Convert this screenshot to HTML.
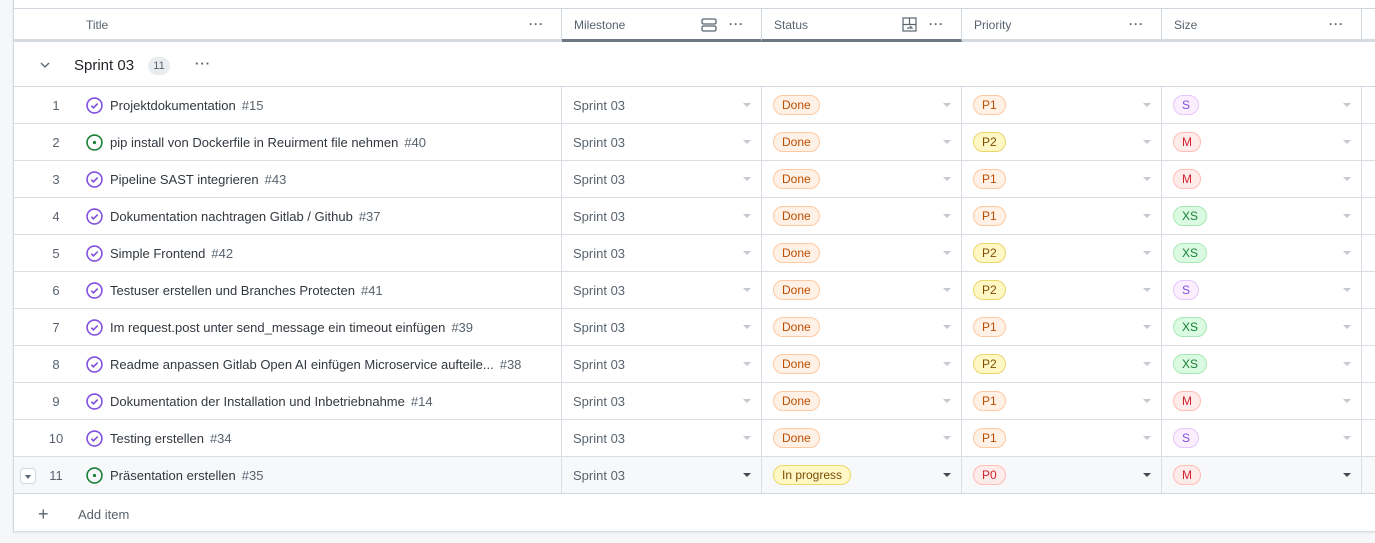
<!DOCTYPE html><html><head><meta charset="utf-8"><style>
*{box-sizing:border-box;margin:0;padding:0}
body{width:1375px;height:543px;background:#f6f7f9;font-family:"Liberation Sans",sans-serif;font-size:13px;color:#1f2328;overflow:hidden;position:relative}
.wrap{position:absolute;left:13px;top:0;width:1362px;height:532px;background:#fff;border-left:1px solid #d0d7de;box-shadow:0 1px 2px rgba(0,0,0,.08)}
.top{position:absolute;left:0;top:8px;width:1362px;border-top:1px solid #d0d7de}
.hdr{position:absolute;top:9px;height:33px;border-right:1px solid #d0d7de;border-bottom:3px solid #d6dbe1;font-size:12px;color:#59636e;padding:9px 0 0 12px}
.hdr.dk{border-bottom-color:#6e7781}
.dots{position:absolute;right:17px;top:8px;letter-spacing:1px;font-size:12px;color:#59636e;font-weight:bold}
.grp{position:absolute;left:0;top:42px;width:1362px;height:45px;border-bottom:1px solid #d0d7de}
.row{position:absolute;left:0;width:1362px;height:37px;border-bottom:1px solid #d8dee4}
.c{position:absolute;top:0;height:36px;border-right:1px solid #d8dee4}
.num{position:absolute;left:29px;width:26px;text-align:center;top:11px;color:#59636e}
.ic{position:absolute;left:72px;top:10px}
.t{position:absolute;left:96px;top:11px;color:#32383f;white-space:nowrap}
.t span{color:#59636e;margin-left:6px}
.ms{position:absolute;left:11px;top:11px;color:#59636e}
.car{position:absolute;right:10px;top:16px;width:0;height:0;border-left:4px solid transparent;border-right:4px solid transparent;border-top:4px solid #c4c9cf}
.pill{position:absolute;left:11px;top:8px;height:20px;border-radius:10px;border:1px solid;font-size:12px;line-height:18px;padding:0 8px}
.o{background:#fff1e5;border-color:#ffc9a0;color:#bc4c00}
.y{background:#fff8c5;border-color:#ebd66a;color:#7d4e00}
.r{background:#ffebe9;border-color:#ffbdb5;color:#cf222e}
.p{background:#fbefff;border-color:#e5c6fb;color:#8250df}
.g{background:#dafbe1;border-color:#a6e8b5;color:#1a7f37}
</style></head><body>
<div class="wrap">
<div class="top"></div>
<div class="hdr" style="left:0;width:548px;padding-left:72px">Title<span class="dots">···</span></div>
<div class="hdr dk" style="left:548px;width:200px">Milestone<svg style="position:absolute;right:44px;top:9px" width="16" height="14" viewBox="0 0 16 14"><rect x="1" y="1" width="14" height="5" rx="1.5" fill="none" stroke="#59636e" stroke-width="1.3"/><rect x="1" y="8" width="14" height="5" rx="1.5" fill="none" stroke="#59636e" stroke-width="1.3"/></svg><span class="dots">···</span></div>
<div class="hdr dk" style="left:748px;width:200px">Status<svg style="position:absolute;right:44px;top:8px" width="15" height="15" viewBox="0 0 15 15"><rect x="1" y="1" width="13" height="13" fill="none" stroke="#59636e" stroke-width="1.2"/><path d="M1 7.5H14M7.5 1V7.5M5 11h5l-2-2" fill="none" stroke="#59636e" stroke-width="1.2"/></svg><span class="dots">···</span></div>
<div class="hdr" style="left:948px;width:200px">Priority<span class="dots">···</span></div>
<div class="hdr" style="left:1148px;width:200px">Size<span class="dots">···</span></div>
<div class="hdr" style="left:1348px;width:14px;border-right:none"></div>
<div class="grp">
<svg style="position:absolute;left:26px;top:20px" width="10" height="7" viewBox="0 0 10 7"><path d="M1 1l4 4 4-4" fill="none" stroke="#59636e" stroke-width="1.3"/></svg>
<span style="position:absolute;left:60px;top:15px;font-size:15px;color:#1f2328">Sprint 03</span>
<span style="position:absolute;left:134px;top:15px;width:22px;height:18px;border-radius:9px;background:#eaedf0;font-size:11px;text-align:center;line-height:18px;color:#59636e">11</span>
<span style="position:absolute;left:181px;top:14px;font-weight:bold;letter-spacing:1px;color:#59636e">···</span>
</div>

<div class="row" style="top:87px"><div class="num">1</div><svg class="ic" width="17" height="17" viewBox="0 0 16 16"><circle cx="8" cy="8" r="7" fill="none" stroke="#8250df" stroke-width="1.5"/><path d="M5 8.2l2 2 4-4" fill="none" stroke="#8250df" stroke-width="1.5"/></svg><div class="t">Projektdokumentation<span>#15</span></div><div class="c" style="left:0;width:548px"></div><div class="c" style="left:548px;width:200px"><div class="ms">Sprint 03</div><div class="car"></div></div><div class="c" style="left:748px;width:200px"><div class="pill o">Done</div><div class="car"></div></div><div class="c" style="left:948px;width:200px"><div class="pill o">P1</div><div class="car"></div></div><div class="c" style="left:1148px;width:200px"><div class="pill p">S</div><div class="car"></div></div></div>

<div class="row" style="top:124px"><div class="num">2</div><svg class="ic" width="17" height="17" viewBox="0 0 16 16"><circle cx="8" cy="8" r="7" fill="none" stroke="#1a7f37" stroke-width="1.5"/><circle cx="8" cy="8" r="1.5" fill="#1a7f37"/></svg><div class="t">pip install von Dockerfile in Reuirment file nehmen<span>#40</span></div><div class="c" style="left:0;width:548px"></div><div class="c" style="left:548px;width:200px"><div class="ms">Sprint 03</div><div class="car"></div></div><div class="c" style="left:748px;width:200px"><div class="pill o">Done</div><div class="car"></div></div><div class="c" style="left:948px;width:200px"><div class="pill y">P2</div><div class="car"></div></div><div class="c" style="left:1148px;width:200px"><div class="pill r">M</div><div class="car"></div></div></div>

<div class="row" style="top:161px"><div class="num">3</div><svg class="ic" width="17" height="17" viewBox="0 0 16 16"><circle cx="8" cy="8" r="7" fill="none" stroke="#8250df" stroke-width="1.5"/><path d="M5 8.2l2 2 4-4" fill="none" stroke="#8250df" stroke-width="1.5"/></svg><div class="t">Pipeline SAST integrieren<span>#43</span></div><div class="c" style="left:0;width:548px"></div><div class="c" style="left:548px;width:200px"><div class="ms">Sprint 03</div><div class="car"></div></div><div class="c" style="left:748px;width:200px"><div class="pill o">Done</div><div class="car"></div></div><div class="c" style="left:948px;width:200px"><div class="pill o">P1</div><div class="car"></div></div><div class="c" style="left:1148px;width:200px"><div class="pill r">M</div><div class="car"></div></div></div>

<div class="row" style="top:198px"><div class="num">4</div><svg class="ic" width="17" height="17" viewBox="0 0 16 16"><circle cx="8" cy="8" r="7" fill="none" stroke="#8250df" stroke-width="1.5"/><path d="M5 8.2l2 2 4-4" fill="none" stroke="#8250df" stroke-width="1.5"/></svg><div class="t">Dokumentation nachtragen Gitlab / Github<span>#37</span></div><div class="c" style="left:0;width:548px"></div><div class="c" style="left:548px;width:200px"><div class="ms">Sprint 03</div><div class="car"></div></div><div class="c" style="left:748px;width:200px"><div class="pill o">Done</div><div class="car"></div></div><div class="c" style="left:948px;width:200px"><div class="pill o">P1</div><div class="car"></div></div><div class="c" style="left:1148px;width:200px"><div class="pill g">XS</div><div class="car"></div></div></div>

<div class="row" style="top:235px"><div class="num">5</div><svg class="ic" width="17" height="17" viewBox="0 0 16 16"><circle cx="8" cy="8" r="7" fill="none" stroke="#8250df" stroke-width="1.5"/><path d="M5 8.2l2 2 4-4" fill="none" stroke="#8250df" stroke-width="1.5"/></svg><div class="t">Simple Frontend<span>#42</span></div><div class="c" style="left:0;width:548px"></div><div class="c" style="left:548px;width:200px"><div class="ms">Sprint 03</div><div class="car"></div></div><div class="c" style="left:748px;width:200px"><div class="pill o">Done</div><div class="car"></div></div><div class="c" style="left:948px;width:200px"><div class="pill y">P2</div><div class="car"></div></div><div class="c" style="left:1148px;width:200px"><div class="pill g">XS</div><div class="car"></div></div></div>

<div class="row" style="top:272px"><div class="num">6</div><svg class="ic" width="17" height="17" viewBox="0 0 16 16"><circle cx="8" cy="8" r="7" fill="none" stroke="#8250df" stroke-width="1.5"/><path d="M5 8.2l2 2 4-4" fill="none" stroke="#8250df" stroke-width="1.5"/></svg><div class="t">Testuser erstellen und Branches Protecten<span>#41</span></div><div class="c" style="left:0;width:548px"></div><div class="c" style="left:548px;width:200px"><div class="ms">Sprint 03</div><div class="car"></div></div><div class="c" style="left:748px;width:200px"><div class="pill o">Done</div><div class="car"></div></div><div class="c" style="left:948px;width:200px"><div class="pill y">P2</div><div class="car"></div></div><div class="c" style="left:1148px;width:200px"><div class="pill p">S</div><div class="car"></div></div></div>

<div class="row" style="top:309px"><div class="num">7</div><svg class="ic" width="17" height="17" viewBox="0 0 16 16"><circle cx="8" cy="8" r="7" fill="none" stroke="#8250df" stroke-width="1.5"/><path d="M5 8.2l2 2 4-4" fill="none" stroke="#8250df" stroke-width="1.5"/></svg><div class="t">Im request.post unter send_message ein timeout einfügen<span>#39</span></div><div class="c" style="left:0;width:548px"></div><div class="c" style="left:548px;width:200px"><div class="ms">Sprint 03</div><div class="car"></div></div><div class="c" style="left:748px;width:200px"><div class="pill o">Done</div><div class="car"></div></div><div class="c" style="left:948px;width:200px"><div class="pill o">P1</div><div class="car"></div></div><div class="c" style="left:1148px;width:200px"><div class="pill g">XS</div><div class="car"></div></div></div>

<div class="row" style="top:346px"><div class="num">8</div><svg class="ic" width="17" height="17" viewBox="0 0 16 16"><circle cx="8" cy="8" r="7" fill="none" stroke="#8250df" stroke-width="1.5"/><path d="M5 8.2l2 2 4-4" fill="none" stroke="#8250df" stroke-width="1.5"/></svg><div class="t">Readme anpassen Gitlab Open AI einfügen Microservice aufteile...<span>#38</span></div><div class="c" style="left:0;width:548px"></div><div class="c" style="left:548px;width:200px"><div class="ms">Sprint 03</div><div class="car"></div></div><div class="c" style="left:748px;width:200px"><div class="pill o">Done</div><div class="car"></div></div><div class="c" style="left:948px;width:200px"><div class="pill y">P2</div><div class="car"></div></div><div class="c" style="left:1148px;width:200px"><div class="pill g">XS</div><div class="car"></div></div></div>

<div class="row" style="top:383px"><div class="num">9</div><svg class="ic" width="17" height="17" viewBox="0 0 16 16"><circle cx="8" cy="8" r="7" fill="none" stroke="#8250df" stroke-width="1.5"/><path d="M5 8.2l2 2 4-4" fill="none" stroke="#8250df" stroke-width="1.5"/></svg><div class="t">Dokumentation der Installation und Inbetriebnahme<span>#14</span></div><div class="c" style="left:0;width:548px"></div><div class="c" style="left:548px;width:200px"><div class="ms">Sprint 03</div><div class="car"></div></div><div class="c" style="left:748px;width:200px"><div class="pill o">Done</div><div class="car"></div></div><div class="c" style="left:948px;width:200px"><div class="pill o">P1</div><div class="car"></div></div><div class="c" style="left:1148px;width:200px"><div class="pill r">M</div><div class="car"></div></div></div>

<div class="row" style="top:420px"><div class="num">10</div><svg class="ic" width="17" height="17" viewBox="0 0 16 16"><circle cx="8" cy="8" r="7" fill="none" stroke="#8250df" stroke-width="1.5"/><path d="M5 8.2l2 2 4-4" fill="none" stroke="#8250df" stroke-width="1.5"/></svg><div class="t">Testing erstellen<span>#34</span></div><div class="c" style="left:0;width:548px"></div><div class="c" style="left:548px;width:200px"><div class="ms">Sprint 03</div><div class="car"></div></div><div class="c" style="left:748px;width:200px"><div class="pill o">Done</div><div class="car"></div></div><div class="c" style="left:948px;width:200px"><div class="pill o">P1</div><div class="car"></div></div><div class="c" style="left:1148px;width:200px"><div class="pill p">S</div><div class="car"></div></div></div>

<div class="row" style="top:457px;background:#f6f8fa;border-bottom-color:#d0d7de"><div style="position:absolute;left:6px;top:11px;width:16px;height:16px;border:1px solid #d0d7de;border-radius:4px;background:#fff"><div style="position:absolute;left:4px;top:6px;border-left:3px solid transparent;border-right:3px solid transparent;border-top:4px solid #59636e"></div></div><div class="num">11</div><svg class="ic" width="17" height="17" viewBox="0 0 16 16"><circle cx="8" cy="8" r="7" fill="none" stroke="#1a7f37" stroke-width="1.5"/><circle cx="8" cy="8" r="1.5" fill="#1a7f37"/></svg><div class="t">Präsentation erstellen<span>#35</span></div><div class="c" style="left:0;width:548px"></div><div class="c" style="left:548px;width:200px"><div class="ms">Sprint 03</div><div class="car" style="border-top-color:#424a53"></div></div><div class="c" style="left:748px;width:200px"><div class="pill y">In progress</div><div class="car" style="border-top-color:#424a53"></div></div><div class="c" style="left:948px;width:200px"><div class="pill r">P0</div><div class="car" style="border-top-color:#424a53"></div></div><div class="c" style="left:1148px;width:200px"><div class="pill r">M</div><div class="car" style="border-top-color:#424a53"></div></div></div>

<div style="position:absolute;left:24px;top:505px;font-size:18px;color:#59636e;line-height:18px">+</div>
<div style="position:absolute;left:64px;top:507px;color:#59636e">Add item</div>
<div style="position:absolute;left:0;top:531px;width:1362px;border-top:1px solid #d8dee4"></div>
</div>
</body></html>
